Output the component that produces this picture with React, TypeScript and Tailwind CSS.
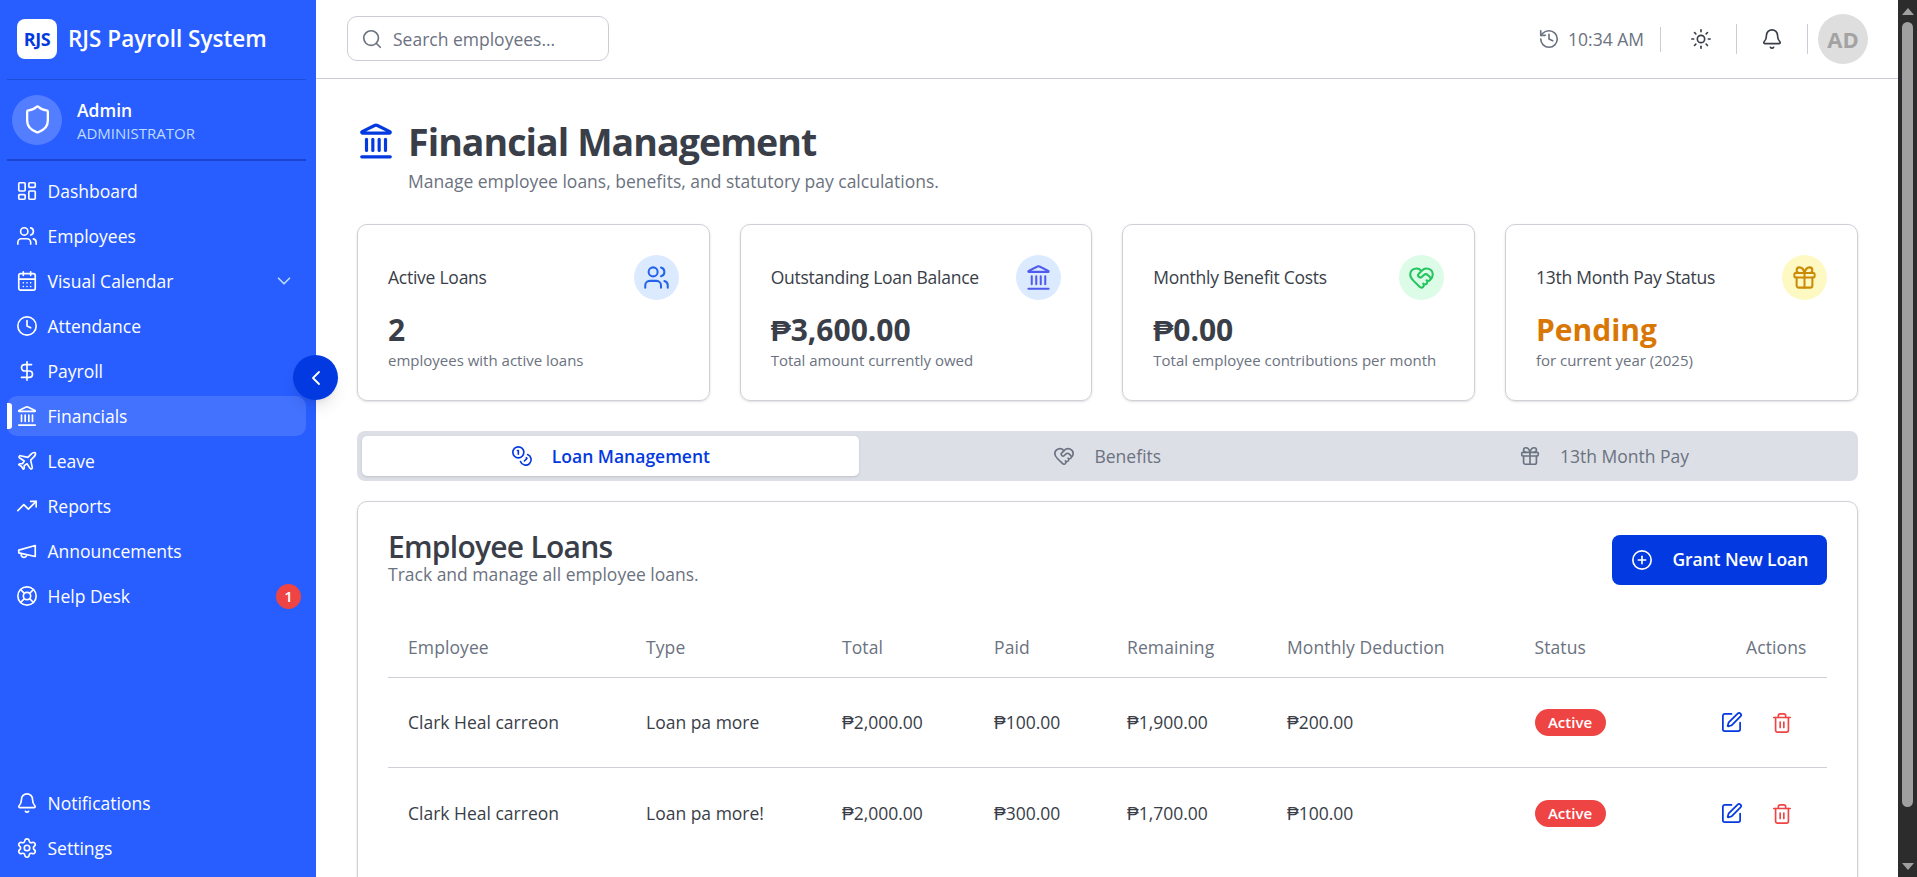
import {
  Bell,
  CalendarDays,
  ChevronDown,
  ChevronLeft,
  CirclePlus,
  Clock,
  Coins,
  DollarSign,
  Gift,
  HeartHandshake,
  History,
  Landmark,
  LayoutDashboard,
  LifeBuoy,
  Plane,
  Search,
  Settings,
  Shield,
  SquarePen,
  Sun,
  Trash2,
  TrendingUp,
  Users,
} from 'lucide-react';

// older lucide megaphone, the current one in the package has another shape
const MegaphoneIcon = ({ className, strokeWidth = 2 }: { className?: string; strokeWidth?: number }) => (
  <svg viewBox="0 0 24 24" fill="none" stroke="currentColor" strokeWidth={strokeWidth} strokeLinecap="round" strokeLinejoin="round" className={className}>
    <path d="m3 11 18-5v12L3 14v-3z" />
    <path d="M11.6 16.8a3 3 0 1 1-5.8-1.6" />
  </svg>
);

const navItems = [
  { icon: LayoutDashboard, label: 'Dashboard' },
  { icon: Users, label: 'Employees' },
  { icon: CalendarDays, label: 'Visual Calendar', chevron: true },
  { icon: Clock, label: 'Attendance' },
  { icon: DollarSign, label: 'Payroll' },
  { icon: Landmark, label: 'Financials', active: true },
  { icon: Plane, label: 'Leave' },
  { icon: TrendingUp, label: 'Reports' },
  { icon: MegaphoneIcon, label: 'Announcements' },
  { icon: LifeBuoy, label: 'Help Desk', badge: '1' },
];

const stats = [
  { title: 'Active Loans', value: '2', sub: 'employees with active loans', icon: Users, circle: 'bg-[#dbeafe]', color: 'text-[#2563eb]', valueColor: 'text-[#393e48]' },
  { title: 'Outstanding Loan Balance', value: '₱3,600.00', sub: 'Total amount currently owed', icon: Landmark, circle: 'bg-[#dbeafe]', color: 'text-[#4f5bee]', valueColor: 'text-[#393e48]' },
  { title: 'Monthly Benefit Costs', value: '₱0.00', sub: 'Total employee contributions per month', icon: HeartHandshake, circle: 'bg-[#dcfce7]', color: 'text-[#22c55e]', valueColor: 'text-[#393e48]' },
  { title: '13th Month Pay Status', value: 'Pending', sub: 'for current year (2025)', icon: Gift, circle: 'bg-[#fef9c3]', color: 'text-[#ca8a04]', valueColor: 'text-[#d97706]' },
];

const tabs = [
  { label: 'Loan Management', icon: Coins, active: true },
  { label: 'Benefits', icon: HeartHandshake },
  { label: '13th Month Pay', icon: Gift },
];

const loans = [
  { name: 'Clark Heal carreon', type: 'Loan pa more', total: '₱2,000.00', paid: '₱100.00', remaining: '₱1,900.00', monthly: '₱200.00' },
  { name: 'Clark Heal carreon', type: 'Loan pa more!', total: '₱2,000.00', paid: '₱300.00', remaining: '₱1,700.00', monthly: '₱100.00' },
];

const NavRow = ({ item }: { item: (typeof navItems)[number] }) => {
  const Icon = item.icon;
  return (
    <div className={`relative flex h-[40px] items-center gap-[9.5px] rounded-[10px] pl-[9px] pr-[5px] text-[17.5px] text-white ${item.active ? 'bg-[#4372ff]' : ''}`}>
      {item.active && <span className="absolute left-0 top-[7px] h-[26px] w-[5px] rounded-r-[3px] bg-white" />}
      <Icon className="h-[22px] w-[22px] shrink-0" strokeWidth={1.8} />
      <span className="flex-1">{item.label}</span>
      {item.chevron && <ChevronDown className="mr-[6px] h-[22px] w-[22px] text-[#bfdbfe]" strokeWidth={1.8} />}
      {item.badge && (
        <span className="flex h-[25px] w-[25px] items-center justify-center rounded-full bg-[#ef4444] text-[15px] font-semibold">{item.badge}</span>
      )}
    </div>
  );
};

const App = () => {
  return (
    <div className="flex h-screen overflow-hidden bg-white font-['Open_Sans',sans-serif] text-[#393e48]">
      {/* Sidebar */}
      <aside className="relative z-10 flex w-[316px] shrink-0 flex-col bg-[#285eff] pl-[7px] pr-[10px] pb-[9px]">
        <div className="flex h-[80px] shrink-0 items-center gap-[11px] border-b border-[#1d4ed8] pl-[10px] pb-[1px]">
          <div className="flex h-[40px] w-[40px] items-center justify-center rounded-[8px] bg-white text-[18px] font-bold tracking-[-0.5px] text-[#0339e0]">RJS</div>
          <span className="text-[22.5px] font-semibold leading-none text-white">RJS Payroll System</span>
        </div>
        <div className="flex h-[81px] shrink-0 items-center gap-[15px] border-b-2 border-[#1a45d0] pl-[5px]">
          <div className="flex h-[50px] w-[50px] items-center justify-center rounded-full bg-white/20">
            <Shield className="h-[31px] w-[31px] text-white" strokeWidth={1.8} />
          </div>
          <div className="pt-[1px]">
            <div className="text-[17.5px] font-semibold leading-[25px] text-white">Admin</div>
            <div className="text-[15px] leading-[20px] text-[#bfdbfe]">ADMINISTRATOR</div>
          </div>
        </div>
        <nav className="mt-[10px] flex flex-col gap-[5px]">
          {navItems.map((item) => (
            <NavRow key={item.label} item={item} />
          ))}
        </nav>
        <div className="mt-auto flex flex-col gap-[5px]">
          <NavRow item={{ icon: Bell, label: 'Notifications' }} />
          <NavRow item={{ icon: Settings, label: 'Settings' }} />
        </div>
        <button className="absolute right-[-22px] top-[355px] flex h-[45px] w-[45px] items-center justify-center rounded-full bg-[#0339e0] text-white shadow-lg">
          <ChevronLeft className="h-[24px] w-[24px]" strokeWidth={1.8} />
        </button>
      </aside>

      {/* Main */}
      <div className="flex min-w-0 flex-1 flex-col overflow-hidden">
        <header className="flex h-[79px] shrink-0 items-center border-b border-[#cbcdd6] pl-[31px] pr-[30px]">
          <div className="mb-[1px] flex h-[45px] w-[262px] items-center gap-[10px] rounded-[10px] border border-[#cbcdd6] pl-[13px] text-[17.5px] text-[#6b7280]">
            <Search className="h-[22px] w-[22px]" strokeWidth={1.8} />
            <span className="pt-[1px]">Search employees...</span>
          </div>
          <div className="ml-auto flex items-center">
            <History className="h-[22px] w-[22px] text-[#6b7280]" strokeWidth={1.8} />
            <span className="ml-[8px] text-[17.5px] text-[#6b7280]">10:34 AM</span>
            <span className="ml-[16px] h-[25px] w-px bg-[#cbcdd6]" />
            <Sun className="ml-[29px] mr-[24px] h-[22px] w-[22px] text-[#393e48]" strokeWidth={1.8} />
            <span className="h-[30px] w-px bg-[#cbcdd6]" />
            <Bell className="ml-[24px] mr-[24px] h-[22px] w-[22px] text-[#393e48]" strokeWidth={1.8} />
            <span className="h-[30px] w-px bg-[#cbcdd6]" />
            <div className="ml-[10px] flex h-[50px] w-[50px] items-center justify-center rounded-full bg-[#dedede] text-[22px] font-bold text-[#a3a3a3]">AD</div>
          </div>
        </header>

        <main className="flex-1 overflow-hidden pl-[41px] pr-[40.5px] pt-[40px]">
          <div className="flex items-start gap-[13px]">
            <Landmark className="mt-[3px] h-[38px] w-[38px] shrink-0 text-[#0339e0]" strokeWidth={2} />
            <div>
              <h1 className="text-[37.5px] font-bold leading-[45px] tracking-[-0.94px]">Financial Management</h1>
              <p className="mt-[5px] text-[17.5px] leading-[25px] text-[#6b7280]">Manage employee loans, benefits, and statutory pay calculations.</p>
            </div>
          </div>

          <div className="mt-[30px] grid grid-cols-4 gap-[30px]">
            {stats.map((s) => (
              <div key={s.title} className="h-[177px] rounded-[10px] border border-[#cdd0d6] p-[30px] shadow-sm">
                <div className="flex items-center justify-between">
                  <span className="text-[17.5px] font-medium tracking-[-0.25px]">{s.title}</span>
                  <div className={`flex h-[45px] w-[45px] items-center justify-center rounded-full ${s.circle}`}>
                    <s.icon className={`h-[27px] w-[27px] ${s.color}`} strokeWidth={1.8} />
                  </div>
                </div>
                <div className={`mt-[10px] text-[30px] font-bold leading-[40px] ${s.valueColor}`}>{s.value}</div>
                <div className="text-[15px] leading-[20px] text-[#6b7280]">{s.sub}</div>
              </div>
            ))}
          </div>

          <div className="mt-[30px] grid h-[50px] grid-cols-3 rounded-[8px] bg-[#dcdfe6] p-[5px]">
            {tabs.map((t) => (
              <div
                key={t.label}
                className={`flex items-center justify-center gap-[19px] rounded-[5px] text-[17.5px] ${t.active ? 'bg-white font-semibold text-[#0339e0] shadow-sm' : 'font-medium text-[#6b7280]'}`}
              >
                <t.icon className="h-[22px] w-[22px]" strokeWidth={1.8} />
                {t.label}
              </div>
            ))}
          </div>

          <section className="mt-[20px] rounded-[10px] border border-[#cdd0d6] p-[30px] shadow-sm">
            <div className="flex items-center justify-between">
              <div>
                <h2 className="text-[30px] font-semibold leading-[30px] tracking-[-0.75px]">Employee Loans</h2>
                <p className="text-[17.5px] leading-[25px] text-[#6b7280]">Track and manage all employee loans.</p>
              </div>
              <button className="flex h-[50px] w-[215px] items-center gap-[20px] rounded-[8px] bg-[#0339e0] pl-[19px] text-[17.5px] font-semibold tracking-[-0.1px] text-white">
                <CirclePlus className="h-[22px] w-[22px]" strokeWidth={1.8} />
                Grant New Loan
              </button>
            </div>

            <table className="mt-[30px] w-full table-fixed border-collapse text-[17.5px]">
              <thead>
                <tr className="border-b border-[#cdd0d6] text-left tracking-[0.1px] text-[#6b7280]">
                  <th className="h-[60px] w-[238px] pl-[20px] font-medium">Employee</th>
                  <th className="w-[196px] pl-[20px] font-medium">Type</th>
                  <th className="w-[152px] pl-[20px] font-medium">Total</th>
                  <th className="w-[133px] pl-[20px] font-medium">Paid</th>
                  <th className="w-[160px] pl-[20px] font-medium">Remaining</th>
                  <th className="w-[247.5px] pl-[20px] font-medium">Monthly Deduction</th>
                  <th className="w-[130px] pl-[20px] font-medium">Status</th>
                  <th className="pr-[20px] text-right font-medium">Actions</th>
                </tr>
              </thead>
              <tbody>
                {loans.map((l) => (
                  <tr key={l.type} className="border-b border-[#cdd0d6] last:border-0">
                    <td className="h-[90.5px] pl-[20px]">{l.name}</td>
                    <td className="pl-[20px]">{l.type}</td>
                    <td className="pl-[20px]">{l.total}</td>
                    <td className="pl-[20px]">{l.paid}</td>
                    <td className="pl-[20px]">{l.remaining}</td>
                    <td className="pl-[20px]">{l.monthly}</td>
                    <td className="pl-[20px]">
                      <span className="inline-flex h-[27px] w-[71px] items-center justify-center rounded-full bg-[#ef4444] text-[15px] font-semibold text-white">Active</span>
                    </td>
                    <td className="pr-[20px]">
                      <div className="mt-[1px] flex justify-end">
                        <button className="flex h-[40px] w-[50px] items-center justify-center text-[#0339e0]">
                          <SquarePen className="h-[23px] w-[23px]" strokeWidth={1.8} />
                        </button>
                        <button className="flex h-[40px] w-[50px] items-center justify-center text-[#ef4444]">
                          <Trash2 className="h-[22px] w-[22px]" strokeWidth={1.8} />
                        </button>
                      </div>
                    </td>
                  </tr>
                ))}
              </tbody>
            </table>
          </section>
        </main>
      </div>

      {/* Window scrollbar */}
      <div className="flex w-[19px] shrink-0 flex-col items-center bg-[#2c2c2c]">
        <div className="flex h-[22px] items-center justify-center">
          <span className="h-0 w-0 border-x-[6px] border-b-[7px] border-x-transparent border-b-[#a0a0a0]" />
        </div>
        <div className="h-[785px] w-[11px] rounded-full bg-[#a0a0a0]" />
        <div className="mt-auto flex h-[22px] items-center justify-center">
          <span className="h-0 w-0 border-x-[6px] border-t-[7px] border-x-transparent border-t-[#a0a0a0]" />
        </div>
      </div>
    </div>
  );
};

export default App;
